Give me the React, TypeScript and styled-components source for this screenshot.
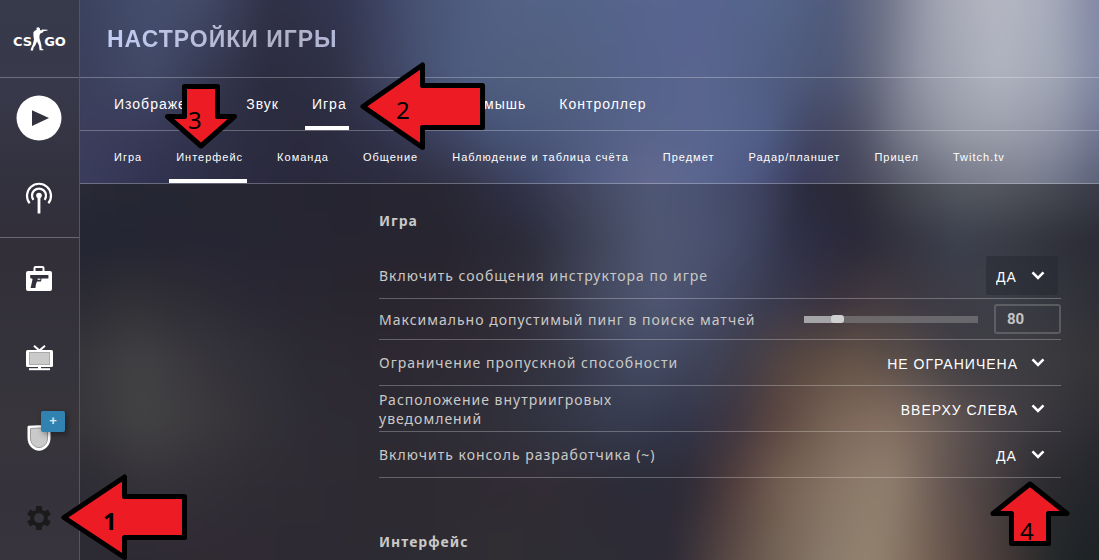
import React, { useState } from "react";
import styled, { createGlobalStyle, css } from "styled-components";

const GlobalStyle = createGlobalStyle`
  *, *::before, *::after { box-sizing: border-box; }
  body { margin: 0; background: #2a2833; font-family: "Liberation Sans", Arial, sans-serif; color: #fff; }
`;

/* ---------- blurred scene behind the panels ---------- */

type Stop = [x: number, color: string];
type BandData = { y: number; stops: Stop[] };

const headerScene: BandData[] = [
  { y: 0, stops: [[0, "#3a425e"], [7, "#454f6e"], [12, "#434b68"], [19, "#2f3046"], [26, "#333752"], [33, "#485274"], [41, "#526285"], [51, "#54648a"], [56, "#58658f"], [61, "#576490"], [68, "#53658a"], [74, "#505a7c"], [79, "#6f7488"], [84, "#a2a4b2"], [90, "#b6b8c3"], [95, "#a9aebd"], [100, "#8288a4"]] },
  { y: 42, stops: [[0, "#3b3f5b"], [7, "#424a68"], [12, "#363a54"], [18, "#2c2c3f"], [25, "#2f3045"], [31, "#414866"], [37, "#4e5c80"], [46, "#51607f"], [56, "#56638d"], [61, "#5a668f"], [68, "#515d83"], [74, "#4c5573"], [78, "#666b80"], [83, "#989ba9"], [90, "#b0b3c0"], [96, "#a0a6b4"], [100, "#7f86a2"]] },
  { y: 71, stops: [[0, "#3c3e5c"], [7, "#383a58"], [15, "#2e2e43"], [22, "#2b2a3d"], [29, "#30314a"], [35, "#3d4260"], [41, "#48567a"], [47, "#4e5a7e"], [55, "#58648b"], [61, "#5a668f"], [67, "#51608a"], [72, "#414561"], [76, "#4b4d63"], [81, "#7b7e8d"], [86, "#989ca8"], [91, "#9d9fac"], [96, "#8e93a5"], [100, "#6f7591"]] },
  { y: 100, stops: [[0, "#3a3d5c"], [7, "#303350"], [15, "#2b2b42"], [22, "#2a293c"], [31, "#2c2b3e"], [38, "#343448"], [44, "#3f4666"], [50, "#525c82"], [56, "#64698f"], [61, "#596690"], [66, "#4f5882"], [71, "#393a5a"], [76, "#434357"], [81, "#5c5f6e"], [86, "#747887"], [92, "#7c818f"], [96, "#70768a"], [100, "#585e74"]] },
];

const mainScene: BandData[] = [
  { y: 0, stops: [[0, "#292a36"], [7, "#262733"], [17, "#262632"], [27, "#252430"], [36, "#282733"], [43, "#31324a"], [51, "#464c66"], [56, "#4f5876"], [61, "#4a5272"], [67, "#3e4360"], [71, "#2a2a3c"], [76, "#2b2a37"], [81, "#44464f"], [86, "#565a62"], [90, "#565961"], [95, "#4b4e57"], [100, "#3a3d49"]] },
  { y: 15, stops: [[0, "#232533"], [12, "#262533"], [27, "#272531"], [36, "#272530"], [44, "#2b2b39"], [49, "#3b3f52"], [56, "#4f5772"], [61, "#4c5372"], [65, "#434a66"], [70, "#2f3048"], [76, "#2a2838"], [81, "#33333f"], [86, "#3c404e"], [90, "#3a3d47"], [95, "#30313c"], [100, "#2a2b34"]] },
  { y: 31, stops: [[0, "#2c2b34"], [5, "#323136"], [17, "#2a2834"], [27, "#29262f"], [36, "#2c2731"], [44, "#322f3a"], [51, "#444a60"], [57, "#505773"], [62, "#454b66"], [67, "#3a3c52"], [73, "#383240"], [78, "#433a3f"], [83, "#3d3a45"], [90, "#3d3f49"], [95, "#363840"], [100, "#2f3037"]] },
  { y: 47, stops: [[0, "#38373b"], [6, "#424144"], [14, "#35333a"], [22, "#2c2a33"], [31, "#2e2933"], [41, "#302c37"], [48, "#363746"], [55, "#454c66"], [61, "#3f4459"], [65, "#413d49"], [70, "#574740"], [76, "#665447"], [81, "#594e4a"], [86, "#423f44"], [90, "#3f3e43"], [96, "#3b3a3d"], [100, "#353437"]] },
  { y: 63, stops: [[0, "#37363a"], [6, "#434244"], [14, "#39373b"], [22, "#2e2c35"], [31, "#2c2a33"], [41, "#30303b"], [53, "#373d50"], [59, "#33364a"], [64, "#3d3541"], [68, "#59443f"], [74, "#7a6558"], [79, "#856f62"], [84, "#6d5f58"], [89, "#4d464a"], [94, "#3b393f"], [100, "#2d2d33"]] },
  { y: 79, stops: [[0, "#2e2c34"], [7, "#36343a"], [17, "#302d35"], [31, "#2e2a31"], [46, "#322c35"], [55, "#2b2b38"], [60, "#2f2b37"], [64, "#4f3c3b"], [69, "#766153"], [76, "#8d7b6a"], [80, "#8f7e6d"], [84, "#6b5b55"], [89, "#4b4244"], [94, "#2e2c31"], [100, "#23262a"]] },
  { y: 100, stops: [[0, "#2c2a33"], [12, "#302a33"], [31, "#2c2a33"], [41, "#302e33"], [51, "#2e2c35"], [58, "#2c2a36"], [62, "#4d3f3f"], [67, "#6d5d52"], [73, "#897a6a"], [78, "#93836f"], [82, "#7d6a5b"], [87, "#5b4a44"], [92, "#3c3433"], [96, "#222629"], [100, "#1d2225"]] },
];

/* The stack bleeds past its panel so that the blur never fades at an edge. */
const BLEED = 32;
const at = (percent: number) => `calc(${BLEED}px + (100% - ${BLEED * 2}px) * ${percent / 100})`;

const SceneStack = styled.div`
  display: grid;
  grid-area: 1 / 1;
  margin: -${BLEED}px;
  filter: blur(12px);
`;

const Band = styled.div<{ $stops: Stop[]; $from?: number; $to: number }>`
  grid-area: 1 / 1;
  background: linear-gradient(to right, ${(p) => p.$stops.map(([x, c]) => `${c} ${at(x)}`).join(", ")});
  ${(p) =>
    p.$from !== undefined &&
    css`
      mask-image: linear-gradient(to bottom, transparent ${at(p.$from)}, #000 ${at(p.$to)});
    `}
`;

const Scene = ({ bands }: { bands: BandData[] }) => (
  <SceneStack aria-hidden="true">
    {bands.map((b, i) => (
      <Band key={b.y} $stops={b.stops} $from={i ? bands[i - 1].y : undefined} $to={b.y} />
    ))}
  </SceneStack>
);

/* ---------- page frame ---------- */

const line = "rgba(255, 255, 255, 0.27)";

const Page = styled.div`
  position: relative;
  display: grid;
  grid-template-columns: 80px minmax(0, 1fr);
  min-height: 100vh;
  overflow: hidden;
`;

const Rail = styled.nav`
  display: flex;
  flex-direction: column;
  border-right: 1px solid #555562;
  background: linear-gradient(to bottom, #363a4a 0%, #38394b 14%, #32313e 32%, #322f39 45%, #34323b 62%, #38363b 75%, #35323c 88%, #37343d 100%);
`;

const RailGroup = styled.div<{ $ruled?: boolean }>`
  display: flex;
  flex-direction: column;
  border-bottom: ${(p) => (p.$ruled ? `1px solid ${line}` : "0")};
`;

const RailButton = styled.button`
  display: grid;
  place-items: center;
  height: 80px;
  padding: 0 1px 0 0;
  border: 0;
  background: none;
  color: #fff;
  cursor: pointer;

  svg { display: block; }
`;

const ShortRailButton = styled(RailButton)`
  height: 79px;
`;

const Logo = styled.a`
  display: flex;
  align-items: center;
  justify-content: center;
  height: 78px;
  border-bottom: 1px solid ${line};
  color: #fff;
  font: bold 13px/16px "DejaVu Sans", sans-serif;
  text-decoration: none;

  span { padding-top: 7px; }
  svg { margin: 0 -4px 0 -2px; }
`;

const BadgeHolder = styled.span`
  position: relative;
`;

const Badge = styled.span`
  position: absolute;
  left: 14px;
  top: -14px;
  width: 24px;
  height: 21px;
  border-radius: 2px;
  background: #3182b0;
  box-shadow: 2px 2px 6px rgba(0, 0, 0, 0.45);
  color: #dbe8f0;
  font: bold 13px/20px "Liberation Sans", Arial, sans-serif;
  text-align: center;
`;

const Body = styled.div`
  display: grid;
  grid-template-rows: auto 1fr;
`;

const Layered = styled.div`
  display: grid;
  grid-template-columns: minmax(0, 1fr);
  overflow: hidden;
`;

const Header = styled.header`
  grid-area: 1 / 1;
  z-index: 1;
`;

const TitleBar = styled.div`
  display: flex;
  align-items: center;
  height: 78px;
  padding: 0 27px;
  border-bottom: 1px solid ${line};
`;

const Title = styled.h1`
  margin: 0;
  font-size: 23px;
  line-height: 28px;
  letter-spacing: 1px;
  background: linear-gradient(to right, #c3cdf3, #b0b0c4 75%, #b4b8d8);
  background-clip: text;
  color: transparent;
`;

const TabBar = styled.nav<{ $small?: boolean }>`
  display: flex;
  gap: ${(p) => (p.$small ? 23 : 24)}px;
  height: 53px;
  padding: 0 27px;
  border-bottom: 1px solid ${line};
  font-size: ${(p) => (p.$small ? 11 : 14)}px;
`;

const Tab = styled.button<{ $active?: boolean; $small?: boolean }>`
  padding: 4px ${(p) => (p.$small ? 4 : 2)}px 0 7px;
  border: 0;
  border-bottom: 4px solid ${(p) => (p.$active ? "#fff" : "transparent")};
  background: none;
  color: #fff;
  font: inherit;
  letter-spacing: 1px;
  white-space: nowrap;
  cursor: pointer;
`;

const Settings = styled.main`
  grid-area: 1 / 1;
  z-index: 1;
  padding: 25px 38px 6px 299px;
  font: 14px/20px "Noto Sans", sans-serif;
  letter-spacing: 1px;
  color: #c9c9c7;
`;

const GroupTitle = styled.h2`
  margin: 0;
  padding: 2px 0;
  font-size: 14px;
  line-height: 20px;
`;

const Rows = styled.div`
  margin: 20px 0 52px;
`;

const Row = styled.div<{ $compact?: boolean }>`
  display: flex;
  align-items: center;
  justify-content: space-between;
  gap: 16px;
  min-height: ${(p) => (p.$compact ? 41 : 46)}px;
  border-bottom: 1px solid ${line};
`;

const RowLabel = styled.label<{ $narrow?: boolean }>`
  max-width: ${(p) => (p.$narrow ? "280px" : "none")};
  line-height: 19px;
`;

const SelectBox = styled.span`
  display: grid;
  align-items: center;
  justify-items: end;
  margin-right: 3px;

  > * { grid-area: 1 / 1; }
  svg { margin-right: 13px; pointer-events: none; }
`;

const Select = styled.select<{ $raised?: boolean }>`
  appearance: none;
  field-sizing: content;
  min-width: 72px;
  height: 39px;
  padding: 2px 40px 0 10px;
  border: 0;
  border-radius: 2px;
  background: ${(p) => (p.$raised ? "rgba(35, 37, 46, 0.45)" : "transparent")};
  color: #fff;
  font: 14px/20px "Liberation Sans", Arial, sans-serif;
  letter-spacing: 1px;

  option { color: #222; }
`;

const RangeGroup = styled.span`
  display: flex;
  align-items: center;
  gap: 16px;
`;

const Range = styled.input<{ $fill: number }>`
  appearance: none;
  width: 174px;
  height: 9px;
  margin: 0;
  background: none;

  &::-webkit-slider-runnable-track {
    height: 7px;
    background: linear-gradient(to right, #a5a4a6 ${(p) => p.$fill}%, rgba(132, 132, 134, 0.6) ${(p) => p.$fill}%);
  }
  &::-webkit-slider-thumb {
    appearance: none;
    width: 13px;
    height: 8px;
    margin-top: -1px;
    border-radius: 3px;
    background: #d0d0d0;
  }
`;

const NumberBox = styled.input`
  width: 67px;
  height: 30px;
  padding: 0 11px;
  border: 2px solid rgba(128, 128, 130, 0.5);
  border-radius: 3px;
  background: transparent;
  color: #c4c4c4;
  font: bold 15px/20px Roboto, sans-serif;
`;

/* ---------- numbered pointers laid over the page ---------- */

const Pointer = styled.div<{ $x: number; $y: number; $w: number; $h: number }>`
  position: absolute;
  z-index: 2;
  left: ${(p) => p.$x}px;
  top: ${(p) => p.$y}px;
  width: ${(p) => p.$w}px;
  height: ${(p) => p.$h}px;
  pointer-events: none;

  svg { display: block; }
  polygon { fill: #ed1c24; stroke: #000; stroke-width: 5; stroke-linejoin: round; }
`;

const PointerNumber = styled.span<{ $x: number; $y: number; $bold?: boolean }>`
  position: absolute;
  left: ${(p) => p.$x}px;
  top: ${(p) => p.$y}px;
  color: #000;
  font: ${(p) => (p.$bold ? "bold" : "normal")} 24px/24px "Noto Sans", sans-serif;
`;

type PointerData = { n: number; x: number; y: number; w: number; h: number; tx: number; ty: number; points: string; bold?: boolean };

const pointers: PointerData[] = [
  { n: 1, x: 61, y: 474, w: 127, h: 86, tx: 42, ty: 35, bold: true, points: "3,43.5 63.5,3 63.5,22.5 123.5,22.5 123.5,63.5 63.5,63.5 63.5,83.5" },
  { n: 2, x: 360, y: 62, w: 126, h: 90, tx: 36, ty: 36, points: "3,44.5 62.5,3 62.5,23.5 122.5,23.5 122.5,65.5 62.5,65.5 62.5,85.5" },
  { n: 3, x: 165, y: 84, w: 73, h: 66, tx: 23, ty: 24, points: "19.5,2.5 52.5,2.5 52.5,32.5 69.5,32.5 36,62 2.5,32.5 19.5,32.5" },
  { n: 4, x: 990, y: 481, w: 81, h: 66, tx: 30, ty: 38, points: "40,3 77,32.5 58.5,32.5 58.5,62.5 21.5,62.5 21.5,32.5 3,32.5" },
];

/* ---------- icons ---------- */

const SoldierIcon = () => (
  <svg width="18" height="24" viewBox="0 0 18 24" fill="#fff" aria-hidden="true">
    <path d="M6.5 0.8 8.6 0.2 10 1.6 9.9 3.2H11.5L12 2.4 17.6 2.8V3.6L13.4 4.2 12.8 5.4 10.4 6.4 9.6 8 9.4 11 10.4 14.2 11.4 18.4 11.6 21.6 13.4 22.6V23.2H9.6L9 18.6 7 14.6 5.2 18.4 3.6 20.6 3 23.4H0.6L1 21.4 2.8 17.4 4 12.4 3.4 8.8 3.4 5.2 5 3.6 6.6 3Z" />
  </svg>
);

const PlayIcon = () => (
  <svg width="46" height="46" viewBox="0 0 46 46" aria-hidden="true">
    <circle cx="23" cy="23" r="22.5" fill="#fff" />
    <path d="M16 15.2 33 23 16 31Z" fill="#33323f" />
  </svg>
);

const AntennaIcon = () => (
  <svg width="28" height="32" viewBox="0 0 28 32" fill="none" stroke="#fff" strokeWidth="2.2" aria-hidden="true">
    <path d="M4.6 21.2A12 12 0 1 1 23.4 21.2" />
    <path d="M8.4 17.8A7 7 0 1 1 19.6 17.8" />
    <circle cx="14" cy="13.6" r="2.8" fill="#fff" stroke="none" />
    <path d="M14 14V31.5" strokeWidth="2.8" />
  </svg>
);

const CaseIcon = () => (
  <svg width="26" height="25" viewBox="0 0 26 25" aria-hidden="true">
    <path d="M8.5 6V2Q8.5 1 9.5 1H16.5Q17.5 1 17.5 2V6" fill="none" stroke="#fff" strokeWidth="2" />
    <rect x="0" y="5" width="26" height="20" rx="2" fill="#fff" />
    <path d="M4.2 9H22.4V12.6H15.6L15 15.4H11L10 18 9.4 22H4.6L6.6 13 4.2 12Z" fill="#32303a" />
    <path d="M11.6 13.2H14.4" stroke="#fff" strokeWidth="1.2" />
  </svg>
);

const TvIcon = () => (
  <svg width="27" height="26" viewBox="0 0 27 26" aria-hidden="true">
    <path d="M8 .8 13.4 5.6 19 .8" fill="none" stroke="#fff" strokeWidth="2" />
    <rect x="0" y="5" width="27" height="17" rx="1.5" fill="#fff" />
    <rect x="3.5" y="7.5" width="20" height="12" fill="#cacaca" stroke="#aaa" />
    <path d="M3 24.2H24" stroke="#fff" strokeWidth="2" />
    <path d="M13.5 21V24" stroke="#fff" strokeWidth="3" />
  </svg>
);

const ShieldIcon = () => (
  <svg width="24" height="26" viewBox="0 0 24 26" aria-hidden="true">
    <path d="M1.5 0.8Q12 -0.4 22.5 0.8Q23.5 1 23.5 2V13C23.5 20 18 25.8 12 25.8S0.5 20 0.5 13V2Q0.5 1 1.5 0.8Z" fill="#fff" />
    <path d="M3.5 3.5Q12 2.5 20.5 3.5V13C20.5 18.5 16.5 22.6 12 22.6S3.5 18.5 3.5 13Z" fill="#cacaca" stroke="#999" />
  </svg>
);

const GearIcon = () => (
  <svg width="24" height="24" viewBox="0 0 24 24" aria-hidden="true">
    <g fill="#1b1b1c">
      {[0, 60, 120].map((a) => (
        <rect key={a} x="9" y="0" width="6" height="24" rx="0.6" transform={`rotate(${a} 12 12)`} />
      ))}
      <circle cx="12" cy="12" r="8.8" />
    </g>
    <circle cx="12" cy="12" r="5" fill="#36343c" />
  </svg>
);

const Chevron = () => (
  <svg width="14" height="9" viewBox="0 0 14 9" fill="none" stroke="#fff" strokeWidth="2.6" aria-hidden="true">
    <path d="M1.5 1.3 7 6.8 12.5 1.3" />
  </svg>
);

/* ---------- settings ---------- */

type SelectRowProps = { id: string; label: string; options: string[]; raised?: boolean; narrow?: boolean };

const SelectRow = ({ id, label, options, raised, narrow }: SelectRowProps) => (
  <Row>
    <RowLabel htmlFor={id} $narrow={narrow}>{label}</RowLabel>
    <SelectBox>
      <Select id={id} $raised={raised}>
        {options.map((o) => <option key={o}>{o}</option>)}
      </Select>
      <Chevron />
    </SelectBox>
  </Row>
);

const PING_MIN = 25;
const PING_MAX = 350;

const PingRow = () => {
  const [ping, setPing] = useState(80);
  const change = (e: React.ChangeEvent<HTMLInputElement>) => setPing(Number(e.target.value));
  return (
    <Row $compact>
      <RowLabel htmlFor="ping">Максимально допустимый пинг в поиске матчей</RowLabel>
      <RangeGroup>
        <Range id="ping" type="range" min={PING_MIN} max={PING_MAX} value={ping} onChange={change} $fill={((ping - PING_MIN) / (PING_MAX - PING_MIN)) * 100} />
        <NumberBox type="text" inputMode="numeric" aria-label="Пинг" value={ping} onChange={change} />
      </RangeGroup>
    </Row>
  );
};

const sections = ["Изображение", "Звук", "Игра", "Клавиатура и мышь", "Контроллер"];
const pages = ["Игра", "Интерфейс", "Команда", "Общение", "Наблюдение и таблица счёта", "Предмет", "Радар/планшет", "Прицел", "Twitch.tv"];

export default function App() {
  const [section, setSection] = useState("Игра");
  const [page, setPage] = useState("Интерфейс");

  return (
    <>
      <GlobalStyle />
      <Page>
        <Rail>
          <Logo href="#home">
            <span>CS</span>
            <SoldierIcon />
            <span>GO</span>
          </Logo>
          <RailGroup $ruled>
            <RailButton aria-label="Играть"><PlayIcon /></RailButton>
            <ShortRailButton aria-label="Трансляции"><AntennaIcon /></ShortRailButton>
          </RailGroup>
          <RailGroup>
            <RailButton aria-label="Инвентарь"><CaseIcon /></RailButton>
            <RailButton aria-label="Просмотр"><TvIcon /></RailButton>
            <RailButton aria-label="Профиль">
              <BadgeHolder>
                <ShieldIcon />
                <Badge>+</Badge>
              </BadgeHolder>
            </RailButton>
            <RailButton aria-label="Настройки"><GearIcon /></RailButton>
          </RailGroup>
        </Rail>

        <Body>
          <Layered>
            <Scene bands={headerScene} />
            <Header>
              <TitleBar><Title>НАСТРОЙКИ ИГРЫ</Title></TitleBar>
              <TabBar>
                {sections.map((s) => (
                  <Tab key={s} $active={s === section} onClick={() => setSection(s)}>{s}</Tab>
                ))}
              </TabBar>
              <TabBar $small>
                {pages.map((s) => (
                  <Tab key={s} $small $active={s === page} onClick={() => setPage(s)}>{s}</Tab>
                ))}
              </TabBar>
            </Header>
          </Layered>

          <Layered>
            <Scene bands={mainScene} />
            <Settings>
              <GroupTitle>Игра</GroupTitle>
              <Rows>
                <SelectRow id="hints" label="Включить сообщения инструктора по игре" options={["ДА", "НЕТ"]} raised />
                <PingRow />
                <SelectRow id="bandwidth" label="Ограничение пропускной способности" options={["НЕ ОГРАНИЧЕНА"]} />
                <SelectRow id="notices" label="Расположение внутриигровых уведомлений" options={["ВВЕРХУ СЛЕВА"]} narrow />
                <SelectRow id="console" label="Включить консоль разработчика (~)" options={["ДА", "НЕТ"]} />
              </Rows>
              <GroupTitle>Интерфейс</GroupTitle>
            </Settings>
          </Layered>
        </Body>

        {pointers.map((p) => (
          <Pointer key={p.n} $x={p.x} $y={p.y} $w={p.w} $h={p.h}>
            <svg width={p.w} height={p.h} aria-hidden="true"><polygon points={p.points} /></svg>
            <PointerNumber $x={p.tx} $y={p.ty} $bold={p.bold}>{p.n}</PointerNumber>
          </Pointer>
        ))}
      </Page>
    </>
  );
}
